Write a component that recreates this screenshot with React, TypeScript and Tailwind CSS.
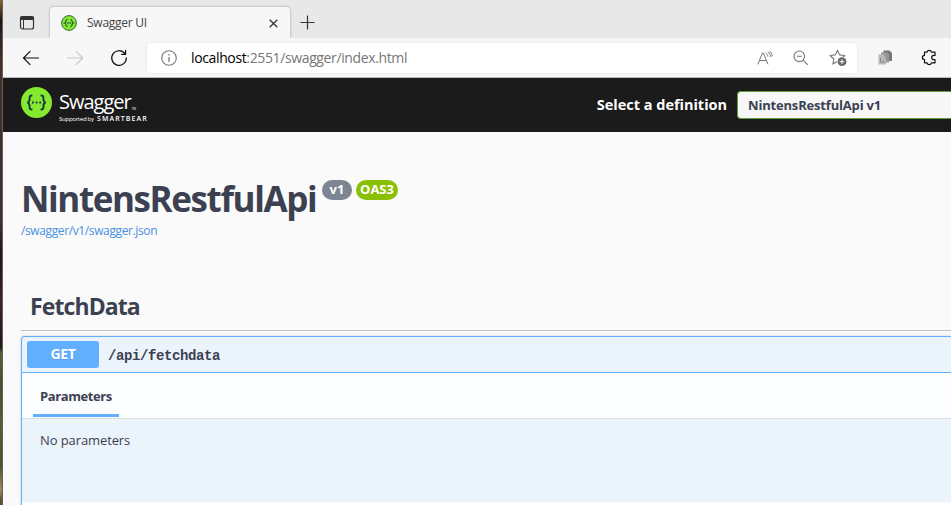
import type { ReactNode } from 'react';

function Glyph({ w, h, children, className = '' }: { w: number; h: number; children: ReactNode; className?: string }) {
  return (
    <svg width={w} height={h} viewBox={`0 0 ${w} ${h}`} fill="none" className={`shrink-0 ${className}`}>
      {children}
    </svg>
  );
}

function TabStrip() {
  return (
    <div className="flex h-[38px] items-end bg-[#e8e8e8]">
      <Glyph w={16} h={16} className="mb-[7px] ml-4">
        <rect x="1.5" y="1.5" width="13" height="12.5" rx="2" stroke="#333" strokeWidth="1.2" />
        <path d="M1 5V3a2 2 0 0 1 2-2h10a2 2 0 0 1 2 2v2z" fill="#333" />
        <path d="M4.5 5v9" stroke="#333" />
      </Glyph>
      <div className="ml-[15px] flex h-[31px] w-[240px] items-center rounded-t-[4px] bg-[#f7f7f7] shadow-[0_0_3px_rgba(0,0,0,0.3)] [clip-path:inset(-4px_-4px_0_-4px)]">
        <Glyph w={16} h={16} className="ml-[11px]">
          <circle cx="8" cy="8" r="7.4" fill="#85ea2d" stroke="#2f6b45" />
          <path d="M6.500 4.500c-1.300 0-1.500.4-1.500 1.400 0 1.100-.1 1.800-1.200 2.100 1.100.3 1.200 1 1.200 2.100 0 1 .2 1.400 1.500 1.400M9.500 4.500c1.300 0 1.500.4 1.500 1.400 0 1.100.1 1.800 1.200 2.100-1.100.3-1.200 1-1.200 2.100 0 1-.2 1.400-1.500 1.400M6 8h4" stroke="#1f4d3c" strokeWidth="1.1" />
        </Glyph>
        <span className="ml-[10px] text-[12px] leading-4 tracking-[-0.25px] text-[#444]">Swagger UI</span>
        <Glyph w={9} h={9} className="mt-px mr-3 ml-auto">
          <path d="m.7.7 7.6 7.6M8.3.7.7 8.3" stroke="#333" strokeWidth="1.3" />
        </Glyph>
      </div>
      <Glyph w={15} h={15} className="mb-[8px] ml-[10px]">
        <path d="M7.5.5v14M.5 7.5h14" stroke="#333" strokeWidth="1.2" />
      </Glyph>
    </div>
  );
}

function Toolbar() {
  return (
    <div className="flex h-10 items-center border-b border-[#b9bcbd] bg-[#f7f7f7]">
      <Glyph w={18} h={16} className="ml-[19px]">
        <path d="M17 8H1.500M8.300 1.200 1.500 8 8.300 14.800" stroke="#111" strokeWidth="1.200" />
      </Glyph>
      <Glyph w={18} h={16} className="ml-[26px]">
        <path d="M1 8h15.800M10 1.200 16.800 8 10 14.800" stroke="#c9c9c9" strokeWidth="1.200" />
      </Glyph>
      <Glyph w={18} h={18} className="ml-[26px]">
        <path d="M14.900 4.700A7.300 7.300 0 1 0 16.300 8.500M15.600 1v4.300h-4.400" stroke="#111" strokeWidth="1.200" />
      </Glyph>
      <div className="ml-[19px] flex h-[30px] w-[710px] items-center rounded-[4px] bg-white shadow-[0_0_3px_rgba(0,0,0,0.1)]">
        <Glyph w={16} h={16} className="ml-[14px]">
          <circle cx="8" cy="8" r="7.3" stroke="#777" strokeWidth="1.1" />
          <path d="M8 7v5M8 4v1.4" stroke="#777" strokeWidth="1.3" />
        </Glyph>
        <span className="ml-[14px] text-[14px] leading-5 tracking-[-0.37px] text-[#777]">
          <span className="text-black">localhost</span>:2551/swagger/index.html
        </span>
        <Glyph w={16} h={16} className="mr-[20px] ml-auto">
          <path d="M.8 14.400 5.400 3h1l4.600 11.400M2.500 10.600h6.800M8.600 3.200c1.600.8 2.300 2 2.300 3.500M10.800 2c2 1.200 2.900 2.800 2.900 4.900M12.500.8c1.800 1.400 2.700 3.200 2.700 5.500" stroke="#777" strokeWidth="1" />
        </Glyph>
        <Glyph w={16} h={16} className="mr-[20px]">
          <circle cx="6.3" cy="6.3" r="5.3" stroke="#777" strokeWidth="1.1" />
          <path d="m10.2 10.2 4.6 4.6M3.7 6.3h5.2" stroke="#777" strokeWidth="1.1" />
        </Glyph>
        <Glyph w={18} h={18} className="mr-[10px]">
          <path d="m8.500 1.200 2.100 4.700 5.200.6-3.900 3.500 1 5-4.400-2.500-4.600 2.600 1-5.100L1 6.500l5.200-.6z" stroke="#777" strokeWidth="1.100" strokeLinejoin="round" />
          <circle cx="13" cy="12.7" r="5" fill="white" />
          <circle cx="13" cy="12.7" r="4.4" fill="#666" />
          <path d="M13 10.3v4.8M10.6 12.7h4.8" stroke="white" />
        </Glyph>
      </div>
      <Glyph w={15} h={15} className="ml-[21px]">
        <path d="M5.500.5h6L14 3v8H5.500z" fill="#777" />
        <path d="M3 2.500h6L11 4v8.500H3z" fill="#999" />
        <path d="M.5 4.500h5L8 7v7.500H.5z" fill="#b8b8b8" />
        <path d="M2.500 8v4H7M8.500 4v6" stroke="#8a8a8a" />
      </Glyph>
      <Glyph w={16} h={17} className="ml-[28px]">
        <path d="M3.500 3.200h2.600a2.200 2.200 0 0 1 4.300 0h3.600v3.200h-1.200a2.100 2.100 0 0 0 0 4.200h1.200v3.200h-3.600a2.200 2.200 0 0 1-4.300 0H3.500v-3.200a2.100 2.100 0 0 1 0-4.200z" stroke="#111" strokeWidth="1.200" strokeLinejoin="round" />
      </Glyph>
    </div>
  );
}

function SwaggerHeader() {
  return (
    <header className="flex h-[54px] items-center bg-[#1b1b1b]">
      <Glyph w={31} h={31} className="mb-[5px] ml-[18px]">
        <circle cx="15.5" cy="15.5" r="15.5" fill="#85ea2d" />
        <path d="M11.400 8.600c-2.300-.2-2.800.5-2.800 2.400 0 2.500.2 4-2.200 4.500 2.400.5 2.200 2 2.200 4.500 0 1.900.5 2.600 2.800 2.400M19.600 8.600c2.300-.2 2.800.5 2.800 2.400 0 2.500-.2 4 2.200 4.500-2.400.5-2.200 2-2.200 4.500 0 1.900-.5 2.600-2.800 2.400" stroke="#173647" strokeWidth="1.900" />
        <path d="M11 15.500h1.800M14.700 15.500h1.800M18.300 15.500h1.800" stroke="#173647" strokeWidth="1.800" />
      </Glyph>
      <div className="ml-[7px] flex h-[54px] w-[100px] flex-col whitespace-nowrap text-white">
        <div className="mt-[12px] flex h-[24px] items-end">
          <span className="text-[20px] leading-[24px] tracking-[-1px]">Swagger</span>
          <span className="mb-[3px] ml-px text-[3px] leading-[4px]">TM</span>
        </div>
        <div className="mt-px flex h-[8px] items-center">
          <span className="w-[37px] text-[6px] leading-[8px] tracking-[-0.250px]">Supported by</span>
          <span className="ml-px text-[7px] leading-[8px] font-semibold tracking-[1.080px]">SMARTBEAR</span>
        </div>
      </div>
      <span className="mr-[10px] ml-auto text-[14.500px] leading-5 font-bold tracking-[-0.020px] whitespace-nowrap text-white">Select a definition</span>
      <div className="flex h-7 w-[214px] shrink-0 items-center rounded-l-[4px] border border-r-0 border-[#62a03f] bg-[#f7f7f7] pl-[10px] text-[13px] leading-5 font-bold tracking-[-0.180px] text-[#3b4151]">
        NintensRestfulApi v1
      </div>
    </header>
  );
}

function ApiInfo() {
  return (
    <section className="h-[150px] pt-[45px] pl-[18px]">
      <div className="flex h-[45px]">
        <h1 className="w-[301px] text-[35px] leading-[44px] font-bold tracking-[-1.400px] whitespace-nowrap text-[#3b4151]">NintensRestfulApi</h1>
        <span className="mt-[3px] flex h-5 w-[30px] items-center justify-center rounded-full bg-[#7d8492] text-[13px] font-bold text-white">v1</span>
        <span className="mt-[3px] ml-1 flex h-5 w-[42px] items-center justify-center rounded-full bg-[#89bf04] text-[13px] font-bold text-white">OAS3</span>
      </div>
      <a className="mt-px block text-[12px] leading-4 tracking-[-0.380px] text-[#4990e2]">/swagger/v1/swagger.json</a>
    </section>
  );
}

function Operation() {
  return (
    <div className="mt-[5px] h-[180px] rounded-tl-[4px] border-t border-l border-[#61affe] bg-[#ebf3fb] text-[#3b4151] shadow-[0_0_3px_rgba(0,0,0,0.19)]">
      <div className="flex h-9 items-center border-b border-[#61affe] pl-[5px]">
        <span className="flex h-[27px] w-[72px] items-center justify-center rounded-[3px] bg-[#61affe] pb-[2px] text-[14px] font-bold tracking-[-0.300px] text-white [text-shadow:0_1px_0_rgba(0,0,0,0.1)]">GET</span>
        <span className="mt-[3px] ml-[9px] font-['Liberation_Mono',monospace] text-[14px] font-bold tracking-[-0.400px]">/api/fetchdata</span>
      </div>
      <div className="h-[46px] border-b border-[#d8dfe6] bg-[#fcfdfe] pl-[11px]">
        <div className="flex h-11 w-[86px] items-center border-b-[3px] border-[#61affe] pl-[7px] text-[13px] font-bold tracking-[-0.400px]">
          <span className="mt-[6px]">Parameters</span>
        </div>
      </div>
      <p className="h-[83px] pt-[11px] pl-[18px] text-[13px] leading-5 tracking-[-0.100px]">No parameters</p>
      <div className="h-4 bg-[#fcfdfe]" />
    </div>
  );
}

export default function App() {
  return (
    <div className="flex h-[505px] w-[951px] overflow-hidden bg-[#fafafa] font-['Open_Sans','Noto_Sans',sans-serif]">
      <div className="w-[3px] shrink-0 border-r border-[#675e5a] bg-[linear-gradient(#8a6730_0px,#1c1713_20px,#42332c_60px,#3c302c_160px,#40322e_220px,#1e1416_255px,#392624_300px,#211719_347px,#596035_353px,#40512b_385px,#5c5b34_425px,#495426_465px,#9b885c_490px,#59562e_500px)]" />
      <div className="w-[948px] shrink-0">
        <TabStrip />
        <Toolbar />
        <SwaggerHeader />
        <ApiInfo />
        <section className="ml-[18px]">
          <h2 className="h-[49px] border-b border-[#bfc0c4] pt-[8px] pl-[9px] text-[23px] leading-[32px] font-bold tracking-[-0.900px] text-[#3b4151]">FetchData</h2>
          <Operation />
        </section>
      </div>
    </div>
  );
}
